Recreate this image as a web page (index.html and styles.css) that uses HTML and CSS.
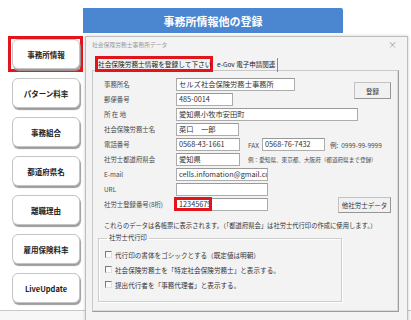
FILE: index.html
```html
<!DOCTYPE html>
<html>
<head>
    <title>事務所情報他の登録</title>
    <link rel="stylesheet" href="styles.css">
</head>
<body>
<div class="page">
    <div class="sheet">
        <nav class="menu">
            <div class="menu-mark"><button class="menu-btn">事務所情報</button></div>
            <button class="menu-btn">パターン料率</button>
            <button class="menu-btn">事務組合</button>
            <button class="menu-btn">都道府県名</button>
            <button class="menu-btn">離職理由</button>
            <button class="menu-btn">雇用保険料率</button>
            <button class="menu-btn">LiveUpdate</button>
        </nav>
        <div class="sheet-main">
            <div class="banner">事務所情報他の登録</div>
        </div>
    </div>
    <div class="sheet-foot"></div>

    <!-- dialog window over the sheet -->
    <div class="dialog">
        <div class="dlg-title">
            <span>社会保険労務士事務所データ</span>
            <span class="dlg-close">×</span>
        </div>
        <div class="tabs">
            <div class="tab-current">社会保険労務士情報を登録して下さい</div>
            <div class="tab">e-Gov 電子申請関連</div>
        </div>
        <div class="pane">
            <div class="head">
                <div class="fields">
                    <div class="row">
                        <span class="lbl">事務所名</span>
                        <div class="field w119">セルズ社会保険労務士事務所</div>
                    </div>
                    <div class="row">
                        <span class="lbl">郵便番号</span>
                        <div class="field w57">485-0014</div>
                    </div>
                </div>
                <button class="win-btn btn-register">登録</button>
            </div>
            <div class="row">
                <span class="lbl">所 在 地</span>
                <div class="field w182">愛知県小牧市安田町</div>
            </div>
            <div class="row">
                <span class="lbl">社会保険労務士名</span>
                <div class="field w63">菜口　一郎</div>
            </div>
            <div class="row">
                <span class="lbl">電話番号</span>
                <div class="field w64">0568-43-1661</div>
                <span class="fax-lbl">FAX</span>
                <div class="field w63">0568-76-7432</div>
                <span class="hint">例:&nbsp; 0999-99-9999</span>
            </div>
            <div class="row">
                <span class="lbl">社労士都道府県会</span>
                <div class="field w64">愛知県</div>
                <span class="hint small">例：愛知県、東京都、大阪府（都道府県まで登録）</span>
            </div>
            <div class="row">
                <span class="lbl">E-mail</span>
                <div class="field w92">cells.infomation@gmail.com</div>
            </div>
            <div class="row">
                <span class="lbl">URL</span>
                <div class="field w92"></div>
            </div>
            <div class="row">
                <span class="lbl">社労士登録番号(8桁)</span>
                <div class="field w92 marked">12345679<span class="mark-num"></span></div>
                <button class="win-btn btn-other">他社労士データ</button>
            </div>

            <p class="note">これらのデータは各帳票に表示されます。（「都道府県会」は社労士代行印の作成に使用します。）</p>

            <fieldset class="group">
                <legend>社労士代行印</legend>
                <div class="chk"><span class="box"></span>代行印の書体をゴシックとする（既定値は明朝）</div>
                <div class="chk"><span class="box"></span>社会保険労務士を「特定社会保険労務士」と表示する。</div>
                <div class="chk"><span class="box"></span>提出代行者を「事務代理者」と表示する。</div>
            </fieldset>
        </div>
    </div>
</div>
</body>
</html>
```

FILE: styles.css
```css
* {
    box-sizing: border-box;
}

body {
    margin: 0;
    font-family: "Noto Sans CJK JP", "Noto Sans", sans-serif;
    color: #333;
    background: #fff;
}

.page {
    position: relative;
    width: 411px;
    height: 320px;
    overflow: hidden;
}

/* sheet behind the dialog */
.sheet {
    display: flex;
    height: 310px;
}

.menu {
    width: 83px;
    padding: 39px 3px 0 12px;
    display: flex;
    flex-direction: column;
    gap: 9px;
}

.menu-btn {
    width: 68px;
    height: 30px;
    padding: 0;
    background: #fff;
    border: 1px solid #c4c4c4;
    border-radius: 6px;
    box-shadow: 1px 2px 1px #9c9c9c;
    font-family: inherit;
    font-size: 7.5px;
    font-weight: bold;
    color: #222;
}

.menu-mark {
    margin: -3px -3px -3px -4px;
    padding-left: 1px;
    border: 3px solid #e3141b;
}

.menu-mark .menu-btn {
    display: block;
}

.sheet-main {
    padding-top: 8px;
}

.banner {
    width: 260px;
    height: 25px;
    background: #4b86d1;
    color: #fff;
    font-size: 11px;
    font-weight: bold;
    display: flex;
    align-items: center;
    justify-content: center;
    border-radius: 0 2px 0 0;
}

.sheet-foot {
    height: 10px;
    border-top: 1px solid #c8c8c8;
    background: #f7f7f7;
}

/* dialog */
.dialog {
    position: absolute;
    left: 85px;
    top: 36px;
    width: 323px;
    height: 300px;
    background: #f3f3f3;
    border: 1px solid #bdbdbd;
    box-shadow: 0 0 3px rgba(0, 0, 0, 0.2);
}

.dlg-title {
    height: 19px;
    display: flex;
    justify-content: space-between;
    padding-left: 6px;
    font-size: 5.8px;
    line-height: 15px;
    color: #9a9a9a;
}

.dlg-close {
    margin-right: 10px;
    font-size: 9px;
    line-height: 15px;
    color: #a0a0a0;
}

.tabs {
    position: relative;
    z-index: 1;
    display: flex;
    align-items: flex-end;
    height: 16px;
    margin-bottom: -2px;
    padding-left: 9px;
}

.tab-current {
    width: 118px;
    height: 16px;
    border: 3px solid #e3141b;
    background: #f3f3f3;
    font-size: 6.7px;
    line-height: 10px;
    text-align: center;
    color: #222;
    white-space: nowrap;
}

.tab {
    height: 14px;
    margin-left: 2px;
    padding: 0 2px;
    border-right: 1px solid #8c8c8c;
    font-size: 6.5px;
    line-height: 12px;
    color: #222;
    white-space: nowrap;
}

.pane {
    margin-left: 6px;
    width: 307px;
    height: 242px;
    padding: 6px 0 0 5px;
    border: 1px solid #c8c8c8;
    border-right-color: #9c9c9c;
    border-bottom-color: #9c9c9c;
    box-shadow: inset -1px -1px 0 #dadada;
}

.head {
    display: flex;
}

.fields {
    flex: 1;
}

.row {
    display: flex;
    align-items: center;
    height: 15px;
    padding-left: 6px;
}

.lbl {
    width: 72px;
    flex: none;
    font-size: 6.4px;
    color: #4a4a4a;
    white-space: nowrap;
}

.field {
    flex: none;
    height: 13px;
    padding-left: 2px;
    background: #fff;
    border: 1px solid #acacac;
    border-top-color: #999;
    font-size: 7.3px;
    line-height: 11px;
    color: #333;
    white-space: nowrap;
    overflow: hidden;
}

.field.marked {
    position: relative;
    overflow: visible;
}

.mark-num {
    position: absolute;
    left: -3px;
    top: -2px;
    width: 38px;
    height: 14px;
    border: 3px solid #e3141b;
}

.w57 { width: 57px; }
.w63 { width: 63px; }
.w64 { width: 64px; }
.w92 { width: 92px; }
.w119 { width: 119px; }
.w182 { width: 182px; }

.fax-lbl {
    width: 14px;
    margin-left: 8px;
    font-size: 6.5px;
    color: #4a4a4a;
}

.hint {
    margin-left: 5px;
    font-size: 6.5px;
    color: #4a4a4a;
    white-space: nowrap;
}

.hint.small {
    margin-left: 8px;
    font-size: 5.6px;
}

.win-btn {
    flex: none;
    padding: 0;
    background: #f1f1f1;
    border: 1px solid #c2c2c2;
    border-right-color: #969696;
    border-bottom-color: #969696;
    font-family: inherit;
    font-size: 6.5px;
    color: #333;
}

.btn-register {
    width: 37px;
    height: 17px;
    margin: 5px 7px 0 0;
}

.btn-other {
    width: 53px;
    height: 16px;
    margin: 0 7px 0 auto;
}

.note {
    margin: 9px 0 0;
    padding-left: 6px;
    font-size: 6.3px;
    line-height: 10px;
    color: #333;
    white-space: nowrap;
}

.group {
    width: 244px;
    margin: 3px 0 0;
    padding: 5px 0 9px 6px;
    border: 1px solid #cdcdcd;
    box-shadow: inset 1px 1px 0 #fff, 1px 1px 0 #fff;
}

.group legend {
    margin-left: 2px;
    padding: 0 2px;
    font-size: 6.3px;
    line-height: 8px;
    color: #333;
}

.chk {
    display: flex;
    align-items: center;
    gap: 3px;
    height: 15px;
    font-size: 6.6px;
    color: #333;
    white-space: nowrap;
}

.box {
    width: 7px;
    height: 7px;
    background: #fafafa;
    border: 1px solid;
    border-color: #7a7a7a #e0e0e0 #e0e0e0 #7a7a7a;
}
```
